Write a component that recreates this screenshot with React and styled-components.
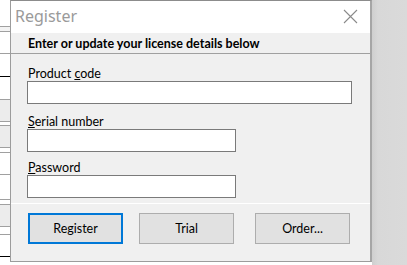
import React from "react";
import styled, { createGlobalStyle } from "styled-components";

const Global = createGlobalStyle`
  html, body { margin: 0; padding: 0; }
  body {
    width: 407px; height: 265px; overflow: hidden;
    background: #ffffff;
    font-family: Lato, "Noto Sans", sans-serif;
  }
`;

const Desktop = styled.div`
  display: flex;
  width: 407px;
  height: 265px;
  background: #ffffff;
`;

const Backdrop = styled.div`
  width: 10px;
  display: flex;
  flex-direction: column;
`;

const BackRow = styled.div`
  height: ${(p) => p.$h}px;
  background: ${(p) => p.$bg || "#ffffff"};
  border-bottom: 1px solid ${(p) => p.$line || "#a0a0a0"};
  box-sizing: border-box;
`;

const Window = styled.div`
  width: 362px;
  height: 262px;
  box-sizing: border-box;
  border: 1px solid #9c9c9c;
  border-top-color: #8c8c8c;
  border-right: 2px solid #a6a6a6;
  background: #f0f0f0;
  display: flex;
  flex-direction: column;
`;

const Shadow = styled.div`
  flex: 1;
  height: 265px;
  background: linear-gradient(to right, #cfcfcf 0px, #d8d8d8 6px, #dadada 100%);
`;

const TitleBar = styled.div`
  height: 32px;
  background: #ffffff;
  display: flex;
  align-items: center;
  justify-content: space-between;
  padding: 0 12px 0 4px;
  flex-shrink: 0;
`;

const Title = styled.span`
  font-family: "Noto Sans", sans-serif;
  font-size: 16px;
  color: #9a9a9a;
  line-height: 20px;
  margin-top: -2px;
`;

const CloseIcon = styled.svg`
  width: 15px;
  height: 15px;
  margin-top: -2px;
`;

const Header = styled.div`
  height: 20px;
  flex-shrink: 0;
  border-bottom: 1px solid #a0a0a0;
  display: flex;
  align-items: center;
  padding-left: 17px;
  font-size: 12.5px;
  font-weight: 700;
  color: #000000;
`;

const Body = styled.div`
  flex: 1;
  padding: 12px 0 0 16px;
  display: flex;
  flex-direction: column;
`;

const Field = styled.div`
  display: flex;
  flex-direction: column;
  margin-top: ${(p) => p.$gap || 0}px;
`;

const Label = styled.label`
  font-size: 12.5px;
  line-height: 15px;
  color: #000000;
  margin-left: 1px;
  u { text-decoration: underline; text-underline-offset: 1px; }
`;

const Input = styled.div`
  width: ${(p) => p.$w}px;
  height: 23px;
  box-sizing: border-box;
  background: #ffffff;
  border: 1px solid #7a7a7a;
`;

const Footer = styled.div`
  height: 48px;
  flex-shrink: 0;
  border-top: 1px solid #ffffff;
  display: flex;
  align-items: flex-start;
  padding: 9px 0 0 17px;
  gap: 16px;
`;

const Button = styled.div`
  width: 95px;
  height: 31px;
  box-sizing: border-box;
  margin-left: ${(p) => p.$ml || 0}px;
  background: #e1e1e1;
  border: ${(p) => (p.$primary ? "2px solid #0078d7" : "1px solid #adadad")};
  display: flex;
  align-items: center;
  justify-content: center;
  font-size: 12.5px;
  color: #000000;
`;

export default function App() {
  return (
    <>
      <Global />
      <Desktop>
        <Backdrop>
          <BackRow $h={27} />
          <BackRow $h={5} $bg="#f3f3f3" />
          <BackRow $h={22} $bg="#ffffff" />
          <BackRow $h={23} $bg="#ffffff" $line="#000000" />
          <BackRow $h={23} $bg="#ffffff" />
          <BackRow $h={22} $bg="#ececec" />
          <BackRow $h={4} $bg="#ffffff" />
          <BackRow $h={22} $bg="#ececec" />
          <BackRow $h={5} $bg="#ffffff" />
          <BackRow $h={22} $bg="#ffffff" />
          <BackRow $h={25} $bg="#ffffff" />
          <BackRow $h={5} $bg="#ffffff" />
          <BackRow $h={22} $bg="#ececec" />
          <BackRow $h={8} $bg="#ffffff" />
          <BackRow $h={22} $bg="#ffffff" $line="#000000" />
        </Backdrop>
        <Window>
          <TitleBar>
            <Title>Register</Title>
            <CloseIcon viewBox="0 0 15 15">
              <path d="M1 1 L14 14 M14 1 L1 14" stroke="#8a8a8a" strokeWidth="1.1" fill="none" />
            </CloseIcon>
          </TitleBar>
          <Header>Enter or update your license details below</Header>
          <Body>
            <Field>
              <Label>Product <u>c</u>ode</Label>
              <Input $w={325} />
            </Field>
            <Field $gap={10}>
              <Label><u>S</u>erial number</Label>
              <Input $w={209} />
            </Field>
            <Field $gap={8}>
              <Label><u>P</u>assword</Label>
              <Input $w={209} />
            </Field>
          </Body>
          <Footer>
            <Button $primary>Register</Button>
            <Button>Trial</Button>
            <Button $ml={5}>Order...</Button>
          </Footer>
        </Window>
        <Shadow />
      </Desktop>
    </>
  );
}
